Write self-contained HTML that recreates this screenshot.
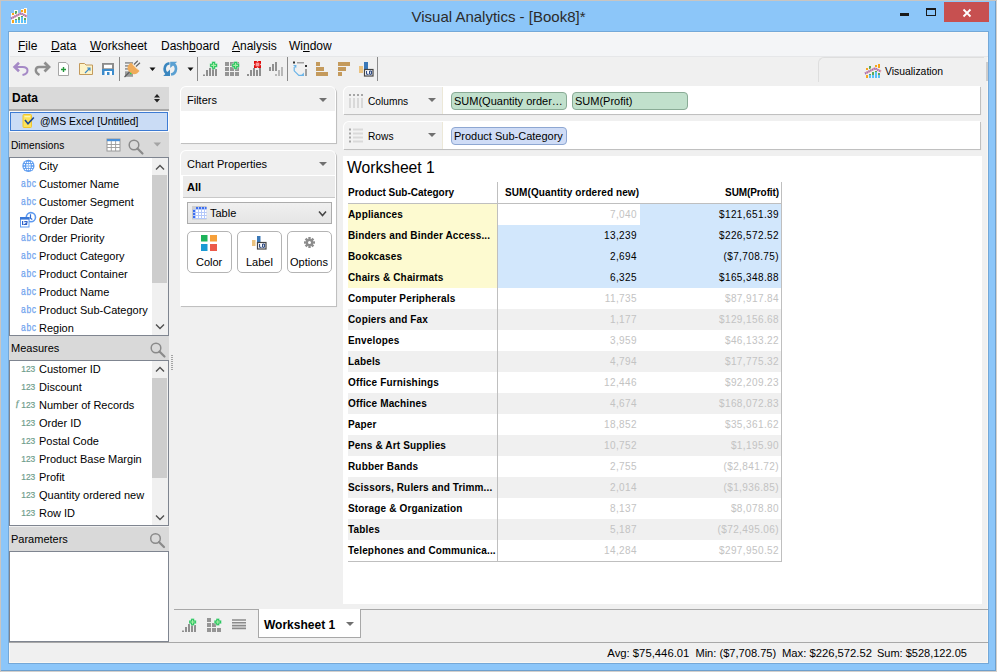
<!DOCTYPE html>
<html><head><meta charset="utf-8">
<style>
*{box-sizing:border-box;margin:0;padding:0}
html,body{width:997px;height:672px;overflow:hidden;background:#d4d0cc;font-family:"Liberation Sans",sans-serif;font-size:11px;color:#000}
.a{position:absolute}
.t{position:absolute;white-space:nowrap;line-height:1}
.ph{background:#d9d9d9}
.list{background:#fff;border:1px solid #7f8590}
.card{background:#fff;border-radius:4px 4px 0 0;box-shadow:1px 1px 0 #c0c0c0,2px 2px 1px -1px #d4d4d4}
.tri{position:absolute;width:0;height:0;border-left:4px solid transparent;border-right:4px solid transparent;border-top:4px solid #707070}
.sb{position:absolute;background:#f0f0f0}
.thumb{position:absolute;background:#cdcdcd}
.abc{position:absolute;left:20.5px;font-size:11.2px;color:#6fa3ee;line-height:1;transform:scaleX(0.76);letter-spacing:0.9px;transform-origin:0 0;-webkit-text-stroke:0.25px #6fa3ee}
.n123{position:absolute;left:21.3px;font-size:8.4px;color:#6f9e8c;line-height:1;-webkit-text-stroke:0.2px #6f9e8c}
.btn{position:absolute;width:45px;height:42px;border:1px solid #b4b4b4;border-radius:5px;background:#fff}
.pill{position:absolute;height:18px;border-radius:4px;font-size:11px;line-height:16px;padding-left:2px;white-space:nowrap;overflow:hidden}
.tsep{position:absolute;top:57px;width:1px;height:24px;background:#8c8c8c}
.row{position:absolute;left:348px;width:433px;height:21px}
.rl{position:absolute;left:0;top:0;width:149px;height:21px;font-weight:bold;font-size:10px;line-height:21px;padding-left:0;letter-spacing:0.15px;white-space:nowrap}
.rq{position:absolute;left:149px;top:0;width:143px;height:21px;text-align:right;padding-right:3px;font-size:10px;line-height:21px;letter-spacing:0.4px;color:#c3c3c3}
.rp{position:absolute;left:292px;top:0;width:141px;height:21px;text-align:right;padding-right:2px;font-size:10px;line-height:21px;letter-spacing:0.4px;color:#c3c3c3}
.sel .rl{background:#fdfad0}
.sel .rq,.sel .rp{background:#d2e7fc;color:#000}
.g{background:#f0f0f0}
</style></head><body>
<!-- window frame -->
<div class="a" style="left:0;top:0;width:996px;height:671px;background:#8cc6f9;border:1px solid #6e9fcc;outline:0"></div>
<div class="a" style="left:0;top:0;width:997px;height:1px;background:#c9c5c1"></div>
<div class="a" style="left:0;top:0;width:1px;height:672px;background:#c9c5c1"></div>
<div class="a" style="left:8px;top:31px;width:981px;height:633px;background:#f0f0f0;border:1px solid #74a8d8"></div>
<div class="a" style="left:9px;top:32px;width:979px;height:631px;border:1px solid #fbf8f4;border-right-color:#faf7f2;border-bottom-color:#faf7f2"></div>

<!-- title bar -->
<svg class="a" style="left:9px;top:6px" width="20" height="20" viewBox="0 0 20 20">
 <path d="M2 7 H5 V4 H9 V7 H12 V3 H15 V2 H18 V18 H2 Z" fill="#fbfbf6"/>
 <rect x="3" y="7" width="2" height="2" fill="#f7a51c"/>
 <rect x="3" y="14" width="2" height="3" fill="#f7a51c"/>
 <path d="M6 5 H8 V7 L7 8 H6 Z" fill="#5da85a"/>
 <rect x="6" y="13" width="2" height="1" fill="#5da85a"/>
 <rect x="6" y="14" width="2" height="3" fill="#5bc0f8"/>
 <rect x="9" y="11" width="2" height="3" fill="#5da85a"/>
 <rect x="9" y="14" width="2" height="3" fill="#5bc0f8"/>
 <rect x="12" y="4" width="2" height="2" fill="#f7a51c"/>
 <rect x="12" y="10" width="2" height="1" fill="#5da85a"/>
 <rect x="12" y="11" width="2" height="6" fill="#5bc0f8"/>
 <rect x="15" y="3" width="2" height="4" fill="#f7a51c"/>
 <rect x="15" y="12" width="2" height="2" fill="#5da85a"/>
 <rect x="15" y="14" width="2" height="3" fill="#5bc0f8"/>
 <polyline points="2,12.5 12,7.3 18,10.5" fill="none" stroke="#f0a4a0" stroke-width="2"/>
 <polyline points="2,12.5 12,7.3 18,10.5" fill="none" stroke="#8a6cc8" stroke-width="2" stroke-dasharray="1 1"/>
</svg>
<div class="t" style="left:0;top:9px;width:997px;text-align:center;font-size:15px;color:#2b2b2b">Visual Analytics - [Book8]*</div>
<div class="a" style="left:900px;top:13px;width:9px;height:3px;background:#1a1a1a"></div>
<div class="a" style="left:926px;top:8px;width:10px;height:8px;border:1px solid #1a1a1a;border-top-width:2px"></div>
<div class="a" style="left:944px;top:2px;width:45px;height:20px;background:#c75050"></div>
<svg class="a" style="left:962px;top:8px" width="10" height="10" viewBox="0 0 10 10"><path d="M1.5 1.5 L8.5 8.5 M8.5 1.5 L1.5 8.5" stroke="#fff" stroke-width="1.8"/></svg>

<!-- menu bar -->
<div class="a" style="left:10px;top:33px;width:978px;height:23px;background:#f4f5f7"></div>
<div class="a" style="left:10px;top:56px;width:978px;height:1px;background:#e6e7e9"></div>
<div class="t" style="left:18px;top:40px;font-size:12px"><u>F</u>ile</div>
<div class="t" style="left:51px;top:40px;font-size:12px"><u>D</u>ata</div>
<div class="t" style="left:90px;top:40px;font-size:12px"><u>W</u>orksheet</div>
<div class="t" style="left:161px;top:40px;font-size:12px">Dash<u>b</u>oard</div>
<div class="t" style="left:232px;top:40px;font-size:12px"><u>A</u>nalysis</div>
<div class="t" style="left:289px;top:40px;font-size:12px">Wi<u>n</u>dow</div>

<!-- toolbar -->
<svg class="a" style="left:0;top:0" width="400" height="90" viewBox="0 0 400 90">
<g fill="none" stroke-linecap="butt">
 <!-- undo -->
 <path d="M19 62.8 L14.6 67 L19 71.2" stroke="#a589c6" stroke-width="2.6"/>
 <path d="M14.5 67 H22.5 Q27.5 67 27.5 70.5 Q27.5 74 22.5 75" stroke="#a589c6" stroke-width="2"/>
 <!-- redo -->
 <path d="M44.5 62.5 L49 67 L44.5 71.5" stroke="#8e8e8e" stroke-width="2.8"/>
 <path d="M49 67 H39 Q35.8 67 35.8 70.5 Q35.8 73 39.5 75" stroke="#8e8e8e" stroke-width="2.4"/>
 <!-- new doc -->
 <path d="M58.5 62.5 H66 L68.5 65 V75.5 H58.5 Z" fill="#fff" stroke="#a6a6a6" stroke-width="1"/>
 <path d="M61 69.5 H66 M63.5 67 V72" stroke="#23983a" stroke-width="1.4"/>
 <!-- folder -->
 <path d="M79.5 63.5 H84.5 L86 65 H92.5 V74.5 H79.5 Z" fill="#fdf3c8" stroke="#c39a5c" stroke-width="1"/>
 <path d="M85 73 L90 68 M87.2 68 H90 V70.8" stroke="#3889c9" stroke-width="1.1"/>
 <!-- save -->
 <rect x="102" y="63" width="12" height="6" fill="#8c8c8c" stroke="none"/>
 <rect x="104" y="64.8" width="8" height="3.5" fill="#fff" stroke="none"/>
 <rect x="102" y="69" width="12" height="6" fill="#3c8bcb" stroke="none"/>
 <rect x="104.5" y="71" width="7.5" height="4" fill="#fff" stroke="none"/>
 <rect x="107" y="72" width="2.5" height="3" fill="#3c8bcb" stroke="none"/>
 <!-- plug -->
 <rect x="125" y="62" width="8" height="1.8" fill="#9c9c9c" stroke="none"/>
 <rect x="125" y="65" width="6" height="1.8" fill="#9c9c9c" stroke="none"/>
 <rect x="125" y="68" width="4" height="1.8" fill="#9c9c9c" stroke="none"/>
 <rect x="125" y="71.3" width="8" height="5.5" fill="#9c9c9c" stroke="none"/>
 <path d="M124.5 77 L130 71.5" stroke="#5f5f5f" stroke-width="1.3"/>
 <path d="M134 64.5 L137.8 60.8 M136 66.5 L140 62.8" stroke="#666" stroke-width="1.2"/>
 <path d="M131 62.5 L139.5 71 L137 73.5 Q133 75.5 129.5 72 Q126 68.5 128.5 65 Z" fill="#efab5a" stroke="none"/>
 <path d="M132.5 64.5 L137.5 69.5" stroke="#f8d8a8" stroke-width="0.9"/>
 <rect x="130" y="72.8" width="1.4" height="1.4" fill="#22dd44" stroke="none"/>
 <!-- dropdowns -->
 <path d="M149.5 67.5 H155.5 L152.5 71 Z" fill="#111" stroke="none"/>
 <path d="M187.5 67.5 H193.5 L190.5 71 Z" fill="#111" stroke="none"/>
 <!-- refresh -->
 <path d="M169.5 63.2 Q165 63.8 164.6 68.8 Q164.6 72.5 167.5 73.8" stroke="#3a86bf" stroke-width="2.6"/>
 <path d="M163.2 76 L170 76 L170 69.5 Z" fill="#3a86bf" stroke="none"/>
 <path d="M171 74.5 Q175.6 73.8 176 68.8 Q176 65 173 63.8" stroke="#5aa0d2" stroke-width="2.6"/>
 <path d="M177.2 61.7 L170.2 61.7 L170.2 68 Z" fill="#5aa0d2" stroke="none"/>
 <!-- new worksheet -->
 <path d="M204 74.5 V76 M207 70 V76 M210 68 V76 M213 69 V76 M216 69 V76" stroke="#8f8f8f" stroke-width="2"/>
 <!-- new dashboard -->
 <g fill="#959595" stroke="none">
  <rect x="225" y="62" width="4" height="4"/><rect x="230" y="62" width="4" height="4"/><rect x="235" y="62" width="4" height="4"/>
  <rect x="225" y="67" width="4" height="4"/><rect x="230" y="67" width="4" height="4"/><rect x="235" y="67" width="4" height="4"/>
  <rect x="225" y="72" width="4" height="4"/><rect x="230" y="72" width="4" height="4"/><rect x="235" y="72" width="4" height="4"/>
 </g>
 <!-- clear sheet -->
 <path d="M248 74 V76 M251 70 V76 M254 68 V76 M257 70 V76 M260 68 V76" stroke="#8f8f8f" stroke-width="2"/>
 <!-- bars 2 -->
 <path d="M270 67 V71 M273 64 V71 M276 62 V71" stroke="#909090" stroke-width="2"/>
 <path d="M276 74 V76 M279 70 V76 M282 67 V76" stroke="#b8b8b8" stroke-width="2"/>
 <!-- swap -->
 <rect x="293" y="61.5" width="2" height="2" fill="#333" stroke="none"/>
 <rect x="297" y="62" width="7" height="1.5" fill="#a0a0a0" stroke="none"/>
 <rect x="305" y="65" width="2" height="2" fill="#333" stroke="none"/>
 <rect x="305" y="69" width="2" height="7" fill="#a0a0a0" stroke="none"/>
 <path d="M294.2 67 V70.8 L298.8 75.4 H302" stroke="#6ab4e8" stroke-width="1.2"/>
 <path d="M293 65 L296.5 65 L296.2 68.2 Z" fill="#6ab4e8" stroke="none"/>
 <path d="M304 76 L300.5 76 L303.8 72.5 Z" fill="#6ab4e8" stroke="none"/>
 <!-- sort asc -->
 <g fill="#c49a5c" stroke="none">
  <rect x="316" y="62" width="4" height="4"/><rect x="316" y="67" width="8" height="4"/><rect x="316" y="72" width="12" height="4"/>
  <rect x="338" y="62" width="12" height="4"/><rect x="338" y="67" width="8" height="4"/><rect x="338" y="72" width="4" height="4"/>
 </g>
 <!-- label -->
 <rect x="359" y="66" width="4" height="7" fill="#ebc380" stroke="none"/>
 <rect x="364" y="62" width="4" height="7" fill="#3a78b8" stroke="none"/>
 <rect x="364.5" y="69.5" width="8.5" height="6.5" fill="#fff" stroke="#444" stroke-width="1.2"/>
 <path d="M366.6 71 V74.3 H368.6 M369.6 71 H371.4 V74.3 H369.6 Z" fill="none" stroke="#1e3c78" stroke-width="1"/>
</g>
<!-- green plus icons -->
<g>
 <g transform="translate(213.6 65.4) scale(1.0)"><path d="M-1.8 -3.8 H1.8 V-1.8 H3.8 V1.8 H1.8 V3.8 H-1.8 V1.8 H-3.8 V-1.8 H-1.8 Z" fill="#22c25a" stroke="#fff" stroke-width="0.6" stroke-opacity="0.6"/><path d="M0 -2.4 V2.4 M-2.4 0 H2.4" stroke="#a8eea8" stroke-width="1.1"/></g>
 <g transform="translate(235.6 65.4) scale(1.0)"><path d="M-1.8 -3.8 H1.8 V-1.8 H3.8 V1.8 H1.8 V3.8 H-1.8 V1.8 H-3.8 V-1.8 H-1.8 Z" fill="#22c25a" stroke="#fff" stroke-width="0.6" stroke-opacity="0.6"/><path d="M0 -2.4 V2.4 M-2.4 0 H2.4" stroke="#a8eea8" stroke-width="1.1"/></g>
 <path d="M254 61 H256.5 L257.5 62 L258.5 61 H261 V63.5 L260 64.5 L261 65.5 V68 H258.5 L257.5 67 L256.5 68 H254 V65.5 L255 64.5 L254 63.5 Z" fill="#e00a0a"/>
 <rect x="255.6" y="62.6" width="3.8" height="3.8" fill="#fa9a9a"/>
</g>
<!-- separators -->
<rect x="119" y="57" width="1" height="24" fill="#8a8a8a"/>
<rect x="197" y="57" width="1" height="24" fill="#8a8a8a"/>
<rect x="287" y="57" width="1" height="24" fill="#8a8a8a"/>
<rect x="377" y="57" width="1" height="24" fill="#8a8a8a"/>
</svg>

<!-- visualization tab -->
<div class="a" style="left:818px;top:57px;width:166px;height:25px;background:#f0f0f0;border:1px solid #dedede;border-bottom:0;border-right:0;border-radius:6px 0 0 0"></div>
<svg class="a" style="left:863px;top:61px" width="20" height="20" viewBox="0 0 20 20">
 <rect x="3" y="7" width="2" height="2" fill="#f7a51c"/>
 <rect x="3" y="14" width="2" height="3" fill="#f7a51c"/>
 <path d="M6 5 H8 V7 L7 8 H6 Z" fill="#5da85a"/>
 <rect x="6" y="13" width="2" height="1" fill="#5da85a"/>
 <rect x="6" y="14" width="2" height="3" fill="#5bc0f8"/>
 <rect x="9" y="11" width="2" height="3" fill="#5da85a"/>
 <rect x="9" y="14" width="2" height="3" fill="#5bc0f8"/>
 <rect x="12" y="4" width="2" height="2" fill="#f7a51c"/>
 <rect x="12" y="10" width="2" height="1" fill="#5da85a"/>
 <rect x="12" y="11" width="2" height="6" fill="#5bc0f8"/>
 <rect x="15" y="3" width="2" height="4" fill="#f7a51c"/>
 <rect x="15" y="12" width="2" height="2" fill="#5da85a"/>
 <rect x="15" y="14" width="2" height="3" fill="#5bc0f8"/>
 <polyline points="2,12.5 12,7.3 18,10.5" fill="none" stroke="#f0a4a0" stroke-width="2"/>
 <polyline points="2,12.5 12,7.3 18,10.5" fill="none" stroke="#8a6cc8" stroke-width="2" stroke-dasharray="1 1"/>
</svg>
<div class="a" style="left:986px;top:62px;width:2px;height:19px;background:#cdcdcd"></div>
<div class="t" style="left:885px;top:67px;font-size:10.4px;color:#000">Visualization</div>

<!-- LEFT PANEL -->
<div class="a ph" style="left:9px;top:87px;width:160px;height:24px;border-bottom:2px solid #a9a9a9"></div>
<div class="t" style="left:12px;top:92px;font-weight:bold;font-size:12px">Data</div>
<div class="a" style="left:9px;top:111px;width:160px;height:21px;background:#cadcf5;border:1px solid #fbfbfb;box-shadow:inset 0 0 0 1px #3d7bd3"></div>
<div class="t" style="left:40px;top:117px;font-size:10.4px">@MS Excel [Untitled]</div>
<div class="a ph" style="left:9px;top:132px;width:160px;height:25px"></div>
<div class="t" style="left:11px;top:141px;font-size:10.2px">Dimensions</div>
<div class="a list" style="left:9px;top:157px;width:160px;height:179px"></div>
<div class="sb" style="left:152px;top:158px;width:16px;height:177px"></div>
<div class="thumb" style="left:152px;top:175px;width:15px;height:108px"></div>
<div class="a ph" style="left:9px;top:336px;width:160px;height:24px"></div>
<div class="t" style="left:11px;top:343px;font-size:11px">Measures</div>
<div class="a list" style="left:9px;top:360px;width:160px;height:166px"></div>
<div class="sb" style="left:152px;top:361px;width:16px;height:164px"></div>
<div class="thumb" style="left:152px;top:378px;width:15px;height:100px"></div>
<div class="a ph" style="left:9px;top:527px;width:160px;height:24px"></div>
<div class="t" style="left:11px;top:534px;font-size:11px">Parameters</div>
<div class="a list" style="left:9px;top:551px;width:160px;height:91px"></div>

<div class="t" style="left:39px;top:160.7px;font-size:11px">City</div>
<svg class="a" style="left:18px;top:158px" width="20" height="16" viewBox="0 0 20 16"><circle cx="10.4" cy="7.9" r="6.1" fill="#5d9cf0"/><rect x="8" y="6" width="5" height="4" fill="#9cc4f6"/><rect x="6.85" y="3.75" width="1.3" height="1.3" fill="#fff"/><rect x="8.85" y="3.75" width="1.3" height="1.3" fill="#fff"/><rect x="10.75" y="3.75" width="1.3" height="1.3" fill="#fff"/><rect x="12.85" y="3.75" width="1.3" height="1.3" fill="#fff"/><rect x="5.75" y="5.95" width="1.3" height="1.3" fill="#fff"/><rect x="8.55" y="5.95" width="1.3" height="1.3" fill="#fff"/><rect x="11.05" y="5.95" width="1.3" height="1.3" fill="#fff"/><rect x="13.75" y="5.95" width="1.3" height="1.3" fill="#fff"/><rect x="5.75" y="8.75" width="1.3" height="1.3" fill="#fff"/><rect x="8.55" y="8.75" width="1.3" height="1.3" fill="#fff"/><rect x="11.05" y="8.75" width="1.3" height="1.3" fill="#fff"/><rect x="13.75" y="8.75" width="1.3" height="1.3" fill="#fff"/><rect x="6.85" y="10.85" width="1.3" height="1.3" fill="#fff"/><rect x="8.85" y="10.85" width="1.3" height="1.3" fill="#fff"/><rect x="10.75" y="10.85" width="1.3" height="1.3" fill="#fff"/><rect x="12.85" y="10.85" width="1.3" height="1.3" fill="#fff"/></svg>
<div class="t" style="left:39px;top:178.7px;font-size:11px">Customer Name</div>
<div class="abc" style="top:177.5px">abc</div>
<div class="t" style="left:39px;top:196.7px;font-size:11px">Customer Segment</div>
<div class="abc" style="top:195.5px">abc</div>
<div class="t" style="left:39px;top:214.7px;font-size:11px">Order Date</div>
<svg class="a" style="left:16px;top:208px" width="24" height="20" viewBox="0 0 24 20"><circle cx="14.9" cy="9.2" r="4.6" fill="#fff" stroke="#5d9af0" stroke-width="1.6"/><path d="M14.5 6.2 V10.2 L16.3 11.5" stroke="#2f6ad0" stroke-width="1.2" fill="none"/><rect x="4.5" y="9.5" width="8.5" height="9.5" fill="#fff" stroke="#5d9af0" stroke-width="1"/><rect x="4" y="9" width="9.5" height="2.6" fill="#3a78d8"/><rect x="6" y="13" width="1.2" height="4" fill="#2f62c8"/><path d="M8.3 13.6 H11 V15 L8.6 16.4 H11.2" stroke="#2f62c8" stroke-width="1.1" fill="none"/></svg>
<div class="t" style="left:39px;top:232.7px;font-size:11px">Order Priority</div>
<div class="abc" style="top:231.5px">abc</div>
<div class="t" style="left:39px;top:250.7px;font-size:11px">Product Category</div>
<div class="abc" style="top:249.5px">abc</div>
<div class="t" style="left:39px;top:268.7px;font-size:11px">Product Container</div>
<div class="abc" style="top:267.5px">abc</div>
<div class="t" style="left:39px;top:286.7px;font-size:11px">Product Name</div>
<div class="abc" style="top:285.5px">abc</div>
<div class="t" style="left:39px;top:304.7px;font-size:11px">Product Sub-Category</div>
<div class="abc" style="top:303.5px">abc</div>
<div class="t" style="left:39px;top:322.7px;font-size:11px">Region</div>
<div class="abc" style="top:321.5px">abc</div>
<svg class="a" style="left:155px;top:164px" width="10" height="7" viewBox="0 0 10 7"><path d="M1 5.5L5 1.5L9 5.5" stroke="#505050" stroke-width="1.4" fill="none"/></svg>
<svg class="a" style="left:155px;top:323px" width="10" height="7" viewBox="0 0 10 7"><path d="M1 1.5L5 5.5L9 1.5" stroke="#505050" stroke-width="1.4" fill="none"/></svg>
<svg class="a" style="left:171px;top:355px" width="2" height="15" viewBox="0 0 2 15"><path d="M0 0.5H2M0 2.5H2M0 4.5H2M0 6.5H2M0 8.5H2M0 10.5H2M0 12.5H2M0 14.5H2" stroke="#a4a4a4" stroke-width="1"/></svg>
<svg class="a" style="left:0;top:80px" width="180" height="480" viewBox="0 80 180 480">
 <path d="M154 97.5 L157 94 L160 97.5 Z M154 99 L157 102.5 L160 99 Z" fill="#222"/>
 <rect x="23" y="114.5" width="8.5" height="13" rx="1" fill="#fde25a" stroke="#f0c530" stroke-width="1"/>
 <rect x="24.5" y="116" width="5.5" height="1.3" fill="#fff6b0"/>
 <path d="M25 120 L28 123.8 L33.8 117.5" fill="none" stroke="#1c4a92" stroke-width="1.6"/>
 <rect x="107" y="139" width="13" height="12" fill="#fff" stroke="#9a9a9a" stroke-width="1"/>
 <rect x="107" y="139" width="13" height="2.2" fill="#4a90d8"/>
 <path d="M107 144.5 H120 M107 147.5 H120 M111.3 141 V151 M115.6 141 V151" stroke="#9a9a9a" stroke-width="0.9"/>
 <g transform="translate(128 139)"><circle cx="6" cy="6" r="4.8" fill="none" stroke="#8a8a8a" stroke-width="1.5"/><path d="M9.5 9.5 L14.5 14.5" stroke="#8a8a8a" stroke-width="2.2" stroke-linecap="round"/></g>
 <path d="M153.5 142.5 H161 L157.25 146.5 Z" fill="#a4a4a4"/>
 <g transform="translate(150 342)"><circle cx="6" cy="6" r="4.8" fill="none" stroke="#8a8a8a" stroke-width="1.5"/><path d="M9.5 9.5 L14.5 14.5" stroke="#8a8a8a" stroke-width="2.2" stroke-linecap="round"/></g>
 <g transform="translate(149.5 532.5)"><circle cx="6" cy="6" r="4.8" fill="none" stroke="#8a8a8a" stroke-width="1.5"/><path d="M9.5 9.5 L14.5 14.5" stroke="#8a8a8a" stroke-width="2.2" stroke-linecap="round"/></g>
</svg>
<div class="t" style="left:39px;top:363.7px;font-size:11px">Customer ID</div>
<div class="n123" style="top:365.4px">123</div>
<div class="t" style="left:39px;top:381.7px;font-size:11px">Discount</div>
<div class="n123" style="top:383.4px">123</div>
<div class="t" style="left:39px;top:399.7px;font-size:11px">Number of Records</div>
<div class="n123" style="top:401.4px">123</div>
<div class="t" style="left:16px;top:398.5px;font-size:8.5px;font-family:'Liberation Serif',serif;font-style:italic;color:#6f9e8c;-webkit-text-stroke:0.3px #6f9e8c">f</div>
<div class="t" style="left:39px;top:417.7px;font-size:11px">Order ID</div>
<div class="n123" style="top:419.4px">123</div>
<div class="t" style="left:39px;top:435.7px;font-size:11px">Postal Code</div>
<div class="n123" style="top:437.4px">123</div>
<div class="t" style="left:39px;top:453.7px;font-size:11px">Product Base Margin</div>
<div class="n123" style="top:455.4px">123</div>
<div class="t" style="left:39px;top:471.7px;font-size:11px">Profit</div>
<div class="n123" style="top:473.4px">123</div>
<div class="t" style="left:39px;top:489.7px;font-size:11px">Quantity ordered new</div>
<div class="n123" style="top:491.4px">123</div>
<div class="t" style="left:39px;top:507.7px;font-size:11px">Row ID</div>
<div class="n123" style="top:509.4px">123</div>
<svg class="a" style="left:155px;top:366px" width="10" height="7" viewBox="0 0 10 7"><path d="M1 5.5L5 1.5L9 5.5" stroke="#505050" stroke-width="1.4" fill="none"/></svg>
<svg class="a" style="left:155px;top:514px" width="10" height="7" viewBox="0 0 10 7"><path d="M1 1.5L5 5.5L9 1.5" stroke="#505050" stroke-width="1.4" fill="none"/></svg>

<!-- MIDDLE -->
<div class="a card" style="left:180px;top:86px;width:156px;height:57px;overflow:hidden;border:1px solid #fff;border-bottom:0;border-radius:6px 6px 0 0"><div class="a" style="left:0;top:0;width:156px;height:24px;background:#f0f0f0"></div></div>
<div class="t" style="left:187px;top:95px">Filters</div>
<div class="tri" style="left:319px;top:98px"></div>
<div class="a card" style="left:180px;top:150px;width:156px;height:156px;overflow:hidden;border:1px solid #fff;border-bottom:0;border-radius:6px 6px 0 0"><div class="a" style="left:0;top:0;width:156px;height:24px;background:#f0f0f0"></div><div class="a" style="left:2px;top:25px;width:154px;height:22px;background:#ebebeb;border-bottom:1px solid #c8c8c8"></div></div>
<div class="t" style="left:187px;top:159px">Chart Properties</div>
<div class="tri" style="left:319px;top:162px"></div>
<div class="t" style="left:187px;top:181.5px;font-weight:bold;font-size:11px">All</div>
<div class="a" style="left:187px;top:202px;width:145px;height:22px;border:1px solid #acacac;background:linear-gradient(#f0f0f0,#e5e5e5)"></div>
<div class="t" style="left:210px;top:208px">Table</div>
<div class="btn" style="left:187px;top:231px"></div>
<div class="btn" style="left:237px;top:231px"></div>
<div class="btn" style="left:287px;top:231px"></div>
<div class="t" style="left:196px;top:257px">Color</div>
<div class="t" style="left:246px;top:257px">Label</div>
<div class="t" style="left:290px;top:257px">Options</div>
<svg class="a" style="left:180px;top:200px" width="160" height="60" viewBox="180 200 160 60">
 <rect x="192" y="206" width="14.5" height="13.5" fill="#c8c8c8"/>
 <rect x="193" y="207" width="13.5" height="12" fill="#b4c8fa"/>
 <g fill="#3c6ef0"><rect x="196" y="207" width="2" height="2"/><rect x="199" y="207" width="2" height="2"/><rect x="202" y="207" width="2" height="2"/><rect x="205" y="207" width="1.5" height="2"/>
 <rect x="193" y="210" width="2" height="2"/><rect x="193" y="213" width="2" height="2"/><rect x="193" y="216" width="2" height="2"/></g>
 <g fill="#fff"><rect x="196" y="210" width="2" height="2"/><rect x="199" y="210" width="2" height="2"/><rect x="202" y="210" width="2" height="2"/><rect x="205" y="210" width="1.5" height="2"/>
 <rect x="196" y="213" width="2" height="2"/><rect x="199" y="213" width="2" height="2"/><rect x="202" y="213" width="2" height="2"/><rect x="205" y="213" width="1.5" height="2"/>
 <rect x="196" y="216" width="2" height="2"/><rect x="199" y="216" width="2" height="2"/><rect x="202" y="216" width="2" height="2"/><rect x="205" y="216" width="1.5" height="2"/></g>
 <rect x="192" y="206" width="4" height="3" fill="#d0d0d0"/>
 <path d="M319 211.5 L322.5 215.5 L326 211.5" fill="none" stroke="#444" stroke-width="1.5"/>
 <rect x="201" y="235" width="6.5" height="6.5" fill="#1db35a"/>
 <rect x="210" y="235" width="7" height="6.5" fill="#f6a03a"/>
 <rect x="201" y="244" width="6.5" height="7" fill="#1a9ad4"/>
 <rect x="210" y="244" width="7" height="7" fill="#ec5a4a"/>
 <rect x="252" y="240" width="3.5" height="6" fill="#ebc380"/>
 <rect x="257" y="236" width="3.5" height="7" fill="#3a78b8"/>
 <rect x="257.5" y="242.5" width="8.5" height="6.5" fill="#fff" stroke="#444" stroke-width="1.2"/>
 <path d="M259.6 244 V247.3 H261.6 M262.6 244 H264.4 V247.3 H262.6 Z" fill="none" stroke="#1e3c78" stroke-width="1"/>
 <g transform="translate(309.5 242.5)" fill="#8c8c8c">
  <circle r="3.6"/>
  <g><rect x="-1.2" y="-5.5" width="2.4" height="11"/><rect x="-5.5" y="-1.2" width="11" height="2.4"/>
  <rect x="-1.2" y="-5.5" width="2.4" height="11" transform="rotate(45)"/><rect x="-5.5" y="-1.2" width="11" height="2.4" transform="rotate(45)"/></g>
  <circle r="1.5" fill="#fff"/>
 </g>
</svg>

<!-- SHELVES -->
<div class="a card" style="left:343px;top:86px;width:637px;height:28px;overflow:hidden;border:1px solid #fff;border-bottom:0;border-radius:6px 0 0 0"><div class="a" style="left:0;top:0;width:99px;height:27px;background:#f2f2f2;border-right:1px solid #ece8d8"></div></div>
<div class="t" style="left:368px;top:97px;font-size:10.2px">Columns</div>
<div class="tri" style="left:428px;top:98px"></div>
<div class="a card" style="left:343px;top:121px;width:637px;height:28px;overflow:hidden;border:1px solid #fff;border-bottom:0;border-radius:6px 0 0 0"><div class="a" style="left:0;top:0;width:99px;height:27px;background:#f2f2f2;border-right:1px solid #ece8d8"></div></div>
<div class="t" style="left:368px;top:132px;font-size:10.2px">Rows</div>
<div class="tri" style="left:428px;top:133px"></div>
<svg class="a" style="left:340px;top:85px" width="30" height="65" viewBox="340 85 30 65">
 <g fill="#a6a6a6"><rect x="349" y="94" width="2" height="2"/><rect x="353" y="94" width="2" height="2"/><rect x="357" y="94" width="2" height="2"/><rect x="361" y="94" width="2" height="2"/></g>
 <g fill="#d9d9d9"><rect x="349" y="98" width="2" height="10"/><rect x="353" y="98" width="2" height="10"/><rect x="357" y="98" width="2" height="10"/><rect x="361" y="98" width="2" height="10"/></g>
 <g fill="#a6a6a6"><rect x="349" y="128.5" width="2" height="2"/><rect x="349" y="132.5" width="2" height="2"/><rect x="349" y="136.5" width="2" height="2"/><rect x="349" y="140.5" width="2" height="2"/></g>
 <g fill="#d9d9d9"><rect x="353" y="128.5" width="10" height="2"/><rect x="353" y="132.5" width="10" height="2"/><rect x="353" y="136.5" width="10" height="2"/><rect x="353" y="140.5" width="10" height="2"/></g>
</svg>
<div class="pill" style="left:451px;top:92px;width:116px;background:#c1e0cc;border:1px solid #8aab96">SUM(Quantity order…</div>
<div class="pill" style="left:572px;top:92px;width:116px;background:#c1e0cc;border:1px solid #8aab96">SUM(Profit)</div>
<div class="pill" style="left:451px;top:127px;width:116px;background:#cfdcf6;border:1px solid #8ea7d2">Product Sub-Category</div>

<!-- WORKSHEET -->
<div class="a" style="left:343px;top:156px;width:639px;height:448px;background:#fff"></div>
<div class="t" style="left:347px;top:160px;font-size:15.7px">Worksheet 1</div>
<div class="t" style="left:348px;top:188px;font-weight:bold;font-size:10px;letter-spacing:0px">Product Sub-Category</div>
<div class="t" style="left:505px;top:188px;font-weight:bold;font-size:10px;letter-spacing:0.1px">SUM(Quantity ordered new)</div>
<div class="t" style="left:600px;top:188px;width:179px;text-align:right;font-weight:bold;font-size:10px;letter-spacing:-0.1px">SUM(Profit)</div>
<div class="row" style="top:204px"><div class="rl" style="background:#fdfad0">Appliances</div><div class="rq" style="background:#fff;color:#c3c3c3">7,040</div><div class="rp" style="background:#d2e7fc;color:#000">$121,651.39</div></div>
<div class="row" style="top:225px"><div class="rl" style="background:#fdfad0">Binders and Binder Access...</div><div class="rq" style="background:#d2e7fc;color:#000">13,239</div><div class="rp" style="background:#d2e7fc;color:#000">$226,572.52</div></div>
<div class="row" style="top:246px"><div class="rl" style="background:#fdfad0">Bookcases</div><div class="rq" style="background:#d2e7fc;color:#000">2,694</div><div class="rp" style="background:#d2e7fc;color:#000">($7,708.75)</div></div>
<div class="row" style="top:267px"><div class="rl" style="background:#fdfad0">Chairs &amp; Chairmats</div><div class="rq" style="background:#d2e7fc;color:#000">6,325</div><div class="rp" style="background:#d2e7fc;color:#000">$165,348.88</div></div>
<div class="row" style="top:288px;background:#fff"><div class="rl">Computer Peripherals</div><div class="rq">11,735</div><div class="rp">$87,917.84</div></div>
<div class="row" style="top:309px;background:#f0f0f0"><div class="rl">Copiers and Fax</div><div class="rq">1,177</div><div class="rp">$129,156.68</div></div>
<div class="row" style="top:330px;background:#fff"><div class="rl">Envelopes</div><div class="rq">3,959</div><div class="rp">$46,133.22</div></div>
<div class="row" style="top:351px;background:#f0f0f0"><div class="rl">Labels</div><div class="rq">4,794</div><div class="rp">$17,775.32</div></div>
<div class="row" style="top:372px;background:#fff"><div class="rl">Office Furnishings</div><div class="rq">12,446</div><div class="rp">$92,209.23</div></div>
<div class="row" style="top:393px;background:#f0f0f0"><div class="rl">Office Machines</div><div class="rq">4,674</div><div class="rp">$168,072.83</div></div>
<div class="row" style="top:414px;background:#fff"><div class="rl">Paper</div><div class="rq">18,852</div><div class="rp">$35,361.62</div></div>
<div class="row" style="top:435px;background:#f0f0f0"><div class="rl">Pens &amp; Art Supplies</div><div class="rq">10,752</div><div class="rp">$1,195.90</div></div>
<div class="row" style="top:456px;background:#fff"><div class="rl">Rubber Bands</div><div class="rq">2,755</div><div class="rp">($2,841.72)</div></div>
<div class="row" style="top:477px;background:#f0f0f0"><div class="rl">Scissors, Rulers and Trimm...</div><div class="rq">2,014</div><div class="rp">($1,936.85)</div></div>
<div class="row" style="top:498px;background:#fff"><div class="rl">Storage &amp; Organization</div><div class="rq">8,137</div><div class="rp">$8,078.80</div></div>
<div class="row" style="top:519px;background:#f0f0f0"><div class="rl">Tables</div><div class="rq">5,187</div><div class="rp">($72,495.06)</div></div>
<div class="row" style="top:540px;background:#fff"><div class="rl">Telephones and Communica...</div><div class="rq">14,284</div><div class="rp">$297,950.52</div></div>
<div class="a" style="left:348px;top:203px;width:434px;height:1px;background:#bfbfbf"></div>
<div class="a" style="left:497px;top:182px;width:1px;height:379px;background:#bfbfbf"></div>
<div class="a" style="left:781px;top:182px;width:1px;height:379px;background:#bfbfbf"></div>
<div class="a" style="left:348px;top:561px;width:434px;height:1px;background:#bfbfbf"></div>

<!-- BOTTOM TABS -->
<div class="a" style="left:174px;top:609px;width:814px;height:1px;background:#a8a8a8"></div>
<div class="a" style="left:258px;top:609px;width:103px;height:29px;background:#fff;border:1px solid #a8a8a8;border-top:0"></div>
<div class="t" style="left:264px;top:619px;font-weight:bold;font-size:12px">Worksheet 1</div>
<div class="tri" style="left:346px;top:622px"></div>
<svg class="a" style="left:170px;top:610px" width="90" height="30" viewBox="170 610 90 30">
 <path d="M183 630.5 V632 M186 627 V632 M189 624 V632 M192 625 V632 M195 625 V632" stroke="#8f8f8f" stroke-width="2"/>
 <g fill="#959595">
  <rect x="207" y="618" width="4" height="4"/>
  <rect x="207" y="623" width="4" height="4"/><rect x="212" y="623" width="4" height="4"/>
  <rect x="207" y="628" width="4" height="4"/><rect x="212" y="628" width="4" height="4"/><rect x="217" y="628" width="4" height="4"/>
 </g>
 <path d="M232 620 H246 M232 622.8 H246 M232 625.6 H246 M232 628.4 H246" stroke="#8a8a8a" stroke-width="1.6"/>
 <g transform="translate(192.6 622) scale(0.95)"><path d="M-1.8 -3.8 H1.8 V-1.8 H3.8 V1.8 H1.8 V3.8 H-1.8 V1.8 H-3.8 V-1.8 H-1.8 Z" fill="#22c25a" stroke="#fff" stroke-width="0.6" stroke-opacity="0.6"/><path d="M0 -2.4 V2.4 M-2.4 0 H2.4" stroke="#a8eea8" stroke-width="1.1"/></g>
 <g transform="translate(217.8 622) scale(0.95)"><path d="M-1.8 -3.8 H1.8 V-1.8 H3.8 V1.8 H1.8 V3.8 H-1.8 V1.8 H-3.8 V-1.8 H-1.8 Z" fill="#22c25a" stroke="#fff" stroke-width="0.6" stroke-opacity="0.6"/><path d="M0 -2.4 V2.4 M-2.4 0 H2.4" stroke="#a8eea8" stroke-width="1.1"/></g>
</svg>

<!-- STATUS -->
<div class="a" style="left:9px;top:642px;width:979px;height:1px;background:#a8a8a8"></div>
<div class="t" style="left:607.3px;top:647.6px;font-size:11.3px">Avg: $75,446.01</div>
<div class="t" style="left:695.4px;top:647.6px;font-size:11.1px">Min: ($7,708.75)</div>
<div class="t" style="left:781.9px;top:647.6px;font-size:11.25px">Max: $226,572.52</div>
<div class="t" style="left:877px;top:647.6px;font-size:11px">Sum: $528,122.05</div>
</body></html>
